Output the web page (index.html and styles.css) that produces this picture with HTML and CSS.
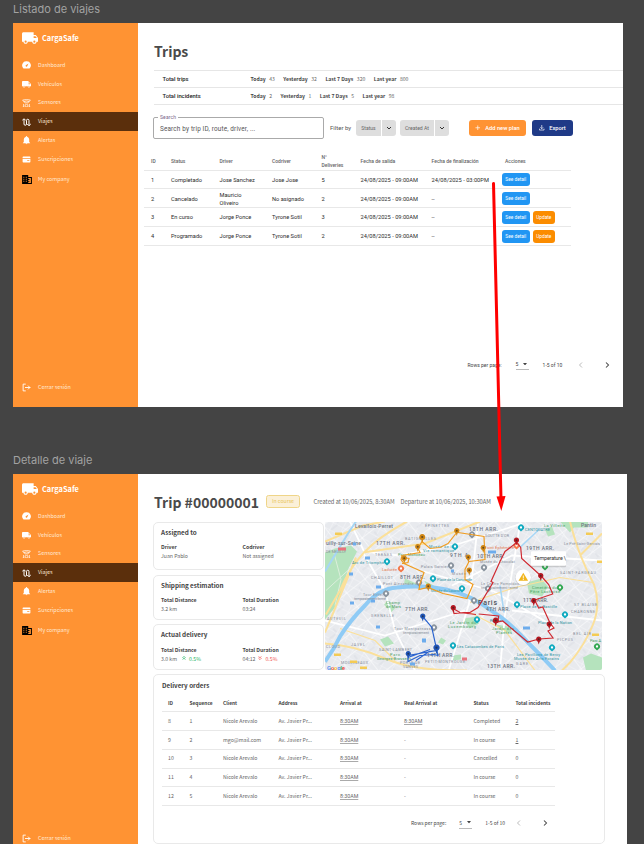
FILE: index.html
```html
<!DOCTYPE html>
<html lang="es">
<head>
<meta charset="utf-8">
<title>CargaSafe</title>
<link rel="stylesheet" href="styles.css">
</head>
<body>
<svg class="defs" width="0" height="0">
  <symbol id="truck" viewBox="1 4 22 16"><path d="M20 8h-3V4H3c-1.1 0-2 .9-2 2v11h2c0 1.66 1.34 3 3 3s3-1.34 3-3h6c0 1.66 1.34 3 3 3s3-1.34 3-3h2v-5l-3-4zM6 18.5a1.5 1.5 0 1 1 0-3 1.5 1.5 0 0 1 0 3zm13.5-9l1.96 2.5H17V9.5h2.5zm-1.5 9a1.5 1.5 0 1 1 0-3 1.5 1.5 0 0 1 0 3z"/></symbol>
  <symbol id="gauge" viewBox="0 0 24 24"><path fill-rule="evenodd" d="M12 1a11.500 11.500 0 0 0-8.500 20h17A11.500 11.500 0 0 0 12 1zm5.500 6-3.500 8a2.500 2.500 0 1 1-4-3z"/></symbol>
  <symbol id="sensor" viewBox="0 0 24 24"><path fill="none" stroke="currentColor" stroke-width="2.100" d="M1 3q11-3 22 0M4 7.500q8-4 16 0M8 11.500q4-2.500 8 0M1 3l7 8M23 3l-7 8M4 14v9M20 14v9M1 23h6M17 23h6"/><circle cx="12" cy="18.500" r="3.600" fill="none" stroke="currentColor" stroke-width="2.100"/></symbol>
  <symbol id="route" viewBox="0 0 24 24"><path fill="none" stroke="currentColor" stroke-width="2.800" d="M5 3v14a3.500 3.500 0 0 0 7 0V7a3.500 3.500 0 0 1 7 0v14M0 7l5-5 5 5M14 17l5 5 5-5"/></symbol>
  <symbol id="bell" viewBox="2 1 20 22"><path d="M12 22.500c1.300 0 2.300-1 2.300-2H9.700c0 1 1 2 2.300 2zm7-6v-6c0-3.500-2-6-5.200-6.800V3a1.800 1.800 0 0 0-3.600 0v.7C7 4.500 5 7 5 10.500v6L2.500 19v1h19v-1z"/></symbol>
  <symbol id="card" viewBox="0 0 24 24"><path d="M1 9V6a2 2 0 0 1 2-2h18a2 2 0 0 1 2 2v3zM1 11h22v8a2 2 0 0 1-2 2H3a2 2 0 0 1-2-2zM14 15v2h6v-2z" fill-rule="evenodd"/></symbol>
  <symbol id="company" viewBox="0 0 24 22"><path fill-rule="evenodd" d="M0 0h15v5h9v17H0zM3 4v2.500h2.500V4zm6 0v2.500h2.500V4zM3 9v2.500h2.500V9zm6 0v2.500h2.500V9zM3 14v2.500h2.500V14zm6 0v2.500h2.500V14zM15 7.500V10h3v2h-3v3h3v2h-3v2.500h6.500v-12z"/></symbol>
  <symbol id="logout" viewBox="0 0 24 24"><path fill="none" stroke="currentColor" stroke-width="2.400" d="M10 3H3v18h7M8 12h14M16 7l5 5-5 5"/></symbol>
  <symbol id="down" viewBox="0 0 12 12"><path fill="none" stroke="currentColor" stroke-width="2" d="M2 4l4 4 4-4"/></symbol>
  <symbol id="tri" viewBox="0 0 10 6"><path d="M0 0h10L5 6z"/></symbol>
  <symbol id="prev" viewBox="0 0 12 12"><path fill="none" stroke="currentColor" stroke-width="1.600" d="M8 1L3 6l5 5"/></symbol>
  <symbol id="next" viewBox="0 0 12 12"><path fill="none" stroke="currentColor" stroke-width="2.100" d="M4 1l5 5-5 5"/></symbol>
  <symbol id="pin" viewBox="0 0 12 18" overflow="visible"><path d="M6 18L4 11.700A6 6 0 1 1 8 11.700z"/><circle cx="6" cy="6" r="2.200" fill="#222" opacity=".6"/></symbol>
  <symbol id="poi" viewBox="0 0 12 14" overflow="visible"><path d="M6 14L2 10.500A6 6 0 1 1 10 10.500z"/><circle cx="6" cy="6" r="2.300" fill="#fff"/></symbol>
</svg>

<div class="canvas">
  <h2 class="board-name">Listado de viajes</h2>
  <section class="board board-list">
    <nav class="side">
      <div class="brand"><svg><use href="#truck"/></svg><span>CargaSafe</span></div>
      <a class="item"><svg><use href="#gauge"/></svg>Dashboard</a>
      <a class="item"><svg><use href="#truck"/></svg>Vehículos</a>
      <a class="item"><svg><use href="#sensor"/></svg>Sensores</a>
      <a class="item active"><svg><use href="#route"/></svg>Viajes</a>
      <a class="item"><svg><use href="#bell"/></svg>Alertas</a>
      <a class="item"><svg><use href="#card"/></svg>Suscripciones</a>
      <a class="item company"><svg><use href="#company"/></svg>My company</a>
      <a class="item logout"><svg><use href="#logout"/></svg>Cerrar sesión</a>
    </nav>
    <main class="main">
      <h1 class="title">Trips</h1>
      <div class="stats"><b class="name">Total trips</b><b>Today</b><i>43</i><b>Yesterday</b><i>32</i><b>Last 7 Days</b><i>320</i><b>Last year</b><i>800</i></div>
      <div class="stats last"><b class="name">Total incidents</b><b>Today</b><i>2</i><b>Yesterday</b><i>1</i><b>Last 7 Days</b><i>5</i><b>Last year</b><i>98</i></div>
      <div class="tools">
        <div class="search"><span class="legend">Search</span>Search by trip ID, route, driver, ...</div>
        <span class="filter">Filter by</span>
        <div class="split status"><span>Status</span><em><svg><use href="#down"/></svg></em></div>
        <div class="split created"><span>Created At</span><em><svg><use href="#down"/></svg></em></div>
        <button class="btn add"><svg viewBox="0 0 12 12"><path d="M6 1v10M1 6h10"/></svg>Add new plan</button>
        <button class="btn export"><svg viewBox="0 0 12 12"><path d="M6 0v8M3 5l3 3 3-3M1 8v3h10V8"/></svg>Export</button>
      </div>
      <div class="trips">
        <div class="row head"><span>ID</span><span>Status</span><span>Driver</span><span>Codriver</span><span>N°<br>Deliveries</span><span>Fecha de salida</span><span>Fecha de finalización</span><span class="acc">Acciones</span></div>
        <div class="row"><span>1</span><span>Completado</span><span>Jose Sanchez</span><span>Jose Jose</span><span>5</span><span>24/08/2025 - 09:00AM</span><span>24/08/2025 - 03:00PM</span><span class="acts"><button>See detail</button></span></div>
        <div class="row"><span>2</span><span>Cancelado</span><span>Mauricio<br>Oliveiro</span><span>No asignado</span><span>2</span><span>24/08/2025 - 09:00AM</span><span>--</span><span class="acts"><button>See detail</button></span></div>
        <div class="row"><span>3</span><span>En curso</span><span>Jorge Ponce</span><span>Tyrone Sotil</span><span>3</span><span>24/08/2025 - 09:00AM</span><span>--</span><span class="acts"><button>See detail</button><button class="upd">Update</button></span></div>
        <div class="row"><span>4</span><span>Programado</span><span>Jorge Ponce</span><span>Tyrone Sotil</span><span>2</span><span>24/08/2025 - 09:00AM</span><span>--</span><span class="acts"><button>See detail</button><button class="upd">Update</button></span></div>
      </div>
      <div class="pager"><span>Rows per page:</span><span class="size">5<svg><use href="#tri"/></svg></span><span>1-5 of 10</span><svg class="prev"><use href="#prev"/></svg><svg class="next"><use href="#next"/></svg></div>
    </main>
  </section>

  <h2 class="board-name second">Detalle de viaje</h2>
  <section class="board board-detail">
    <nav class="side">
      <div class="brand"><svg><use href="#truck"/></svg><span>CargaSafe</span></div>
      <a class="item"><svg><use href="#gauge"/></svg>Dashboard</a>
      <a class="item"><svg><use href="#truck"/></svg>Vehículos</a>
      <a class="item"><svg><use href="#sensor"/></svg>Sensores</a>
      <a class="item active"><svg><use href="#route"/></svg>Viajes</a>
      <a class="item"><svg><use href="#bell"/></svg>Alertas</a>
      <a class="item"><svg><use href="#card"/></svg>Suscripciones</a>
      <a class="item company"><svg><use href="#company"/></svg>My company</a>
      <a class="item logout"><svg><use href="#logout"/></svg>Cerrar sesión</a>
    </nav>
    <main class="main">
      <header class="trip-head"><h1 class="title">Trip #00000001</h1><span class="badge">In course</span><span class="made">Created at 10/06/2025, 8:30AM</span><span class="dep">Departure at 10/06/2025, 10:30AM</span></header>
      <div class="overview">
        <div class="cards">
          <div class="info assigned"><h3>Assigned to</h3><dl><dt>Driver</dt><dt>Codriver</dt><dd>Juan Pablo</dd><dd>Not assigned</dd></dl></div>
          <div class="info shipping"><h3>Shipping estimation</h3><dl><dt>Total Distance</dt><dt>Total Duration</dt><dd>3.2 km</dd><dd>03:24</dd></dl></div>
          <div class="info actual"><h3>Actual delivery</h3><dl><dt>Total Distance</dt><dt>Total Duration</dt>
            <dd>3.0 km<span class="up"><svg viewBox="0 0 12 12"><path d="M1 6l5-5 5 5M2 11l4-5 4 5"/></svg>0.5%</span></dd>
            <dd>04:12<span class="dn"><svg viewBox="0 0 12 12"><path d="M1 6l5 5 5-5M2 1l4 5 4-5"/></svg>0.5%</span></dd></dl></div>
        </div>
        <svg class="map" viewBox="325 521.500 277 148">
          <defs>
            <pattern id="st1" width="11" height="8" patternUnits="userSpaceOnUse" patternTransform="rotate(28)"><path d="M0 0h11M0 0v8" fill="none" stroke="#f8f9fb" stroke-width=".7"/></pattern>
            <pattern id="st2" width="23" height="17" patternUnits="userSpaceOnUse" patternTransform="rotate(-38)"><path d="M0 0h23M0 0v17" fill="none" stroke="#fff" stroke-width="1"/><path d="M4 9h8M14 3v5" stroke="#d5d8df" stroke-width=".7"/></pattern>
          </defs>
          <path fill="#e8eaee" d="M325 521h277v149H325z"/>
          <path fill="url(#st1)" d="M325 521h277v149H325z"/>
          <path fill="url(#st2)" d="M325 521h277v149H325z"/>
          <g fill="#b5e3bd">
            <path d="M325 552l10-4 16-3 6 6-9 18-5 18-8 20-10 12z"/>
            <path d="M560 521h28v6h-14l-4 5zM527 582l14-4 7 8-6 10-13-3zM464 618l12-2 3 7-10 5zM388 600l7 8-4 4-7-8zM496 624l12 2 4 5-8 2zM583 657l8-4 11 4v13h-16zM405 578l16 7-3 2-14-4zM380 639l8-3 6 7-9 3zM424 580l10 5-6 2zM441 637l5 3-3 4-5-2zM545 529l7-3 3 8-7 2zM452 655l9-1v5l-8 1z"/>
          </g>
          <path d="M333 549l8 30-6 26M326 590l24-22" fill="none" stroke="#dcefdc" stroke-width="1"/>
          <g fill="none" stroke="#fff" stroke-width="1.800">
            <path d="M350 521l14 30 35 4M363 552l22 38 10 40 20 40M400 555l60-12 62-20M424 571l70 20 60 35M478 523l-9 80-20 66M602 560l-90-5-60 30M500 669l5-55 15-90M325 620l60 15 80-25M602 620l-90-10"/>
          </g>
          <g fill="none" stroke="#fbe09a" stroke-width="2">
            <path d="M407 521q-28 15-43 31T340 590l-14 24M325 541l38-16 22-4M325 643q30 2 60 15t82 12M570 521q5 20 11 35t13 28q7 20-1 40t-23 38l-8 8M580 555l22-22M363 552l62-9 55-22M356 557l-31 75"/>
            <path stroke-width="1.200" d="M470 602l45-15 45-10 33 5M395 660l-20-20-35-12M470 612l35 18 30 40"/>
          </g>
          <path d="M325 571l9-15 14-23 8-12" fill="none" stroke="#a6d6f5" stroke-width="2"/>
          <path d="M325 661q9-12 15-25 10-16 25-31 14-17 32-18 25-3 49 2 25 5 48 23 16 10 33 29 14 14 28 29" fill="none" stroke="#8fcbf5" stroke-width="4"/>
          <path d="M520 547l20-19M500 585l4 27" fill="none" stroke="#a8d7f6" stroke-width="1.600"/>
          <g class="m-area">
            <text x="355" y="527" textLength="38">Levallois-Perret</text><text x="326" y="544" textLength="35">uilly-sur-Seine</text>
            <text x="376" y="544" textLength="29">17TH ARR.</text><text x="400" y="578" textLength="25">8TH ARR.</text><text x="405" y="610" textLength="24">7TH ARR.</text><text x="427" y="656" textLength="27">14TH ARR.</text><text x="450" y="556" textLength="18">9TH A</text>
            <text x="469" y="530" textLength="29">18TH ARR.</text><text x="477" y="557" textLength="27">10TH ARR.</text><text x="526" y="549" textLength="28">19TH ARR.</text><text x="523" y="601" textLength="25">11TH ARR.</text><text x="486" y="610" textLength="24">4TH ARR.</text><text x="487" y="667" textLength="28">13TH ARR.</text><text class="city" x="478" y="604" textLength="19">Paris</text><text x="581" y="526.500" textLength="15">Pantin</text>
          </g>
          <g class="m-small">
            <text x="425" y="526.500" textLength="24">ÉPINETTES</text><text x="405" y="539" textLength="31">BATIGNOLLES</text><text x="375" y="555" textLength="17">TERNES</text><text x="371" y="578" textLength="22">CHAILLOT</text><text x="371" y="616" textLength="23">GRENELLE</text><text x="327" y="619" textLength="19">AUTEUIL</text><text x="351" y="645" textLength="14">JAVEL</text><text x="379" y="650" textLength="33">SAINT-LAMBERT</text><text x="400" y="663" textLength="20">PORTE DE</text><text x="403" y="667" textLength="15">VANVES</text><text x="425" y="662" textLength="40">PETIT-MONTROUGE</text><text x="326" y="647" textLength="14">CLOUD</text><text x="326" y="552" textLength="20">DE NEUILLY</text><text x="341" y="663" textLength="27">MOULINEAUX</text>
            <text x="485" y="536" textLength="24">GOUTTE D'OR</text><text x="560" y="573" textLength="36">SAINT-FARGEAU</text><text x="574" y="605" textLength="23">ST BLAISE</text><text x="571" y="612" textLength="24">CHARONNE</text><text x="573" y="634" textLength="18">BEL AIR</text><text x="557" y="640" textLength="16">PICPUS</text><text x="516" y="664" textLength="12">GARE</text>
            <text x="421" y="567" textLength="27">Palais Garnier</text><text x="383" y="584" textLength="36">Pont Alexandre III</text><text x="363" y="595" textLength="20">Tour Eiffel</text><text x="354" y="599" textLength="32">temporairement fermé</text><text x="394" y="629" textLength="39">Tour Montparnasse</text><text x="403" y="633" textLength="26">temporairement</text><text x="452" y="574" textLength="14">Musée</text><text x="564" y="544" textLength="36">Le Pré-Saint-Gervais</text><text x="480" y="562" textLength="35">Musée du Chocolat</text><text x="481" y="584" textLength="38">Le Centre Pompidou</text><text x="481" y="588" textLength="37">temporairement fermé</text>
          </g>
          <g class="m-teal">
            <text x="352" y="563" textLength="32">Arc de Triomphe</text><text x="429" y="547" textLength="25">Musée de la</text><text x="423" y="551" textLength="31">Vie romantique</text><text x="437" y="580" textLength="35">Place de la Concorde</text><text x="431" y="591" textLength="29">Musée du Louvre</text><text x="525" y="530" textLength="25">CENTQUATRE</text><text x="490" y="621" textLength="12">Panthéon</text><text x="520" y="607" textLength="37">Place de la Bastille</text><text x="538" y="623" textLength="34">Place de la Nation</text><text x="517" y="655" textLength="43">Les Pavillons de Bercy</text><text x="514" y="659" textLength="45">Musée des Arts Forains</text><text x="457" y="647" textLength="47">Les Catacombes de Paris</text>
            <g class="m-green"><text x="398" y="555" textLength="27">Parc Monceau</text><text x="386" y="603" textLength="14">Champ</text><text x="386" y="607" textLength="15">de Mars</text><text x="450" y="623" textLength="26">Le Jardin du</text><text x="448" y="627" textLength="28">Luxembourg</text><text x="492" y="629" textLength="22">Jardin des</text><text x="496" y="633" textLength="16">Plantes</text><text x="390" y="655" textLength="10">Parc</text><text x="377" y="659" textLength="34">Georges-Brassens</text><text x="532" y="588" textLength="25">Cimetière du</text><text x="530" y="592" textLength="30">Père Lachaise</text><text x="544" y="526" textLength="21">La Villette</text><text x="590" y="641.500" textLength="11">Parc A</text></g>
          </g>
          <g class="m-food"><text x="382" y="570" textLength="15">Ladurée</text><text x="484" y="548" textLength="30">Point Éphémère</text></g>
          <g fill="#f4cb55"><path d="M335 532h7v2.500h-7zM334 653h7v2.500h-7zM350 660h7v2.500h-7zM360 666h7v2.500h-7zM586 532h7v2.500h-7zM597 560h5v2.500h-5zM592 633h7v2.500h-7z"/></g>
          <path fill="#e8737d" d="M338 547h8v3h-8zM462 657h5v3h-5z"/>
          <path fill="#6dacec" d="M353 542h3v3h-3zM365 556h5v3h-5zM349 572h4v3h-4zM376 585h5v3h-5zM350 601h4v3h-4zM371 599h4v3h-4zM422 638h4v4h-4zM451 569h3v3h-3zM410 662h5v3h-5zM488 550h8v3h-8zM523 626h7v3h-7zM376 625h4v3h-4z"/>
          <g fill="#12abc0"><use href="#poi" x="384" y="558" width="6" height="7"/><use href="#poi" x="452" y="543" width="6" height="7"/><use href="#poi" x="430" y="575" width="6" height="7"/><use href="#poi" x="459" y="585" width="6" height="7"/><use href="#poi" x="450" y="642" width="6" height="7"/><use href="#poi" x="518" y="524" width="6" height="7"/><use href="#poi" x="474" y="616" width="6" height="7"/><use href="#poi" x="514" y="601" width="6" height="7"/><use href="#poi" x="562" y="611" width="6" height="7"/><use href="#poi" x="549" y="644" width="6" height="7"/></g>
          <g fill="#34a853"><use href="#poi" x="542" y="563" width="6" height="7"/><use href="#poi" x="557" y="584" width="6" height="7"/><use href="#poi" x="594" y="643" width="6" height="7"/></g>
          <g fill="#8a949f"><use href="#poi" x="383" y="590" width="6" height="7"/><use href="#poi" x="431" y="624" width="6" height="7"/><use href="#poi" x="448" y="562" width="6" height="7"/><use href="#poi" x="416" y="579" width="6" height="7"/><use href="#poi" x="469" y="531" width="6" height="7"/><use href="#poi" x="481" y="564" width="6" height="7"/><use href="#poi" x="485" y="585" width="6" height="7"/><use href="#poi" x="471" y="597" width="6" height="7"/></g>
          <g fill="#f4794b"><use href="#poi" x="398" y="565" width="6" height="7"/><use href="#poi" x="513.500" y="542" width="6" height="7"/></g>
          <g fill="none" stroke-width="1.200">
            <path stroke="#f09c20" d="M456.700 532L448 543l-8 4-10 1-8-7-4 7 2 4-18 3-1 4 3 4 20 9-4 11-1 6 9-2 15 6 24 5 6-14-8-5v-10l4-8 16-2-1-23-26-4zM403 557l6 1-1 4-6 1"/>
            <path stroke="#cf2a32" d="M476 614l-16-2-7-4 1 5 10-1 6 0 8-5 15-25-2-1 9-20 5-10 11.700-9 4 5 1 11 20 18 7 8 4 9.500-18 6 4 8 4-1 7.300 16 4 5-6 3 5 7-14 1-11.300 3-25-21-5 1 1-6-20-2"/>
            <path stroke="#2b64cf" d="M422.700 616l9 10.700L438 655l-4-1-14 1-12 6v-6l29-5-8 1-13 9M408 657l22-8"/>
          </g>
          <g fill="#cf8615"><use href="#pin" x="454" y="527.500" width="5.500" height="8"/><use href="#pin" x="419" y="533.500" width="6.500" height="9"/><use href="#pin" x="415" y="543.500" width="5.500" height="8"/><use href="#pin" x="401.500" y="555" width="5.500" height="8"/><use href="#pin" x="425.500" y="583" width="5.500" height="8"/><use href="#pin" x="480.500" y="544.500" width="5.500" height="8"/><use href="#pin" x="465.500" y="554" width="5.500" height="8"/><use href="#pin" x="466.500" y="567" width="5.500" height="8"/></g>
          <g fill="#b51822"><use href="#pin" x="513.700" y="537" width="5.500" height="8"/><use href="#pin" x="538" y="572.500" width="5.500" height="8"/><use href="#pin" x="531" y="597.500" width="5.500" height="8"/><use href="#pin" x="546.500" y="621" width="5.500" height="8"/><use href="#pin" x="536" y="636" width="5.500" height="8"/><use href="#pin" x="492.500" y="617" width="6.500" height="9"/><use href="#pin" x="450.500" y="604.500" width="5.500" height="8"/></g>
          <g fill="#1f55b5"><use href="#pin" x="420" y="613" width="5.500" height="8"/><use href="#pin" x="433" y="644" width="7" height="9.500"/><use href="#pin" x="405.500" y="650.500" width="5.500" height="8"/></g>
          <circle cx="523.300" cy="577.400" r="8" fill="#888" opacity=".3"/><circle cx="523.300" cy="576.800" r="7.700" fill="#fff"/>
          <path d="M523.300 572.200l4.800 8h-9.600z" fill="#f1b51c"/><path d="M523.300 575v3M523.300 578.500v1" stroke="#fff" stroke-width=".9"/>
          <rect x="531.500" y="551.800" width="34.500" height="15" rx="1" fill="#777" opacity=".3"/><rect x="531" y="550.700" width="35" height="14.500" rx="1" fill="#fff"/>
          <text class="m-tip" x="534" y="559.300" textLength="32">Temperature \</text>
          <text class="m-google" x="327" y="669" textLength="18"><tspan fill="#4285f4">G</tspan><tspan fill="#ea4335">o</tspan><tspan fill="#fbbc05">o</tspan><tspan fill="#4285f4">g</tspan><tspan fill="#34a853">l</tspan><tspan fill="#ea4335">e</tspan></text>
        </svg>
      </div>
      <div class="orders">
        <h3>Delivery orders</h3>
        <div class="orow head"><span>ID</span><span>Sequence</span><span>Client</span><span>Address</span><span>Arrival at</span><span>Real Arrival at</span><span>Status</span><span>Total incidents</span></div>
        <div class="orow"><span>8</span><span>1</span><span>Nicole Arevalo</span><span>Av. Javier Pr...</span><span class="t">8:30AM</span><span class="t">8:30AM</span><span>Completed</span><span><u>2</u></span></div>
        <div class="orow"><span>9</span><span>2</span><span>mgo@mail.com</span><span>Av. Javier Pr...</span><span class="t">8:30AM</span><span>-</span><span>In course</span><span><u>1</u></span></div>
        <div class="orow"><span>10</span><span>3</span><span>Nicole Arevalo</span><span>Av. Javier Pr...</span><span class="t">8:30AM</span><span>-</span><span>Cancelled</span><span>0</span></div>
        <div class="orow"><span>11</span><span>4</span><span>Nicole Arevalo</span><span>Av. Javier Pr...</span><span class="t">8:30AM</span><span>-</span><span>In course</span><span>0</span></div>
        <div class="orow"><span>12</span><span>5</span><span>Nicole Arevalo</span><span>Av. Javier Pr...</span><span class="t">8:30AM</span><span>-</span><span>In course</span><span>0</span></div>
        <div class="pager"><span>Rows per page:</span><span class="size">5<svg><use href="#tri"/></svg></span><span>1-5 of 10</span><svg class="prev"><use href="#prev"/></svg><svg class="next"><use href="#next"/></svg></div>
      </div>
    </main>
  </section>
  <svg class="link" viewBox="0 0 14 332"><path d="M3.500 2.500L11 318" stroke="#f00" stroke-width="3" stroke-linecap="round"/><path d="M6.500 315.500l9-.5-4.200 15z" fill="#f00"/></svg>
</div>
</body>
</html>
```
FILE: styles.css
```css
* { box-sizing: border-box; }
html, body { margin: 0; height: 844px; overflow: hidden; background: #444; }
h1, h2, h3, dl, dd { margin: 0; }
i, em { font-style: normal; }
svg { display: block; fill: currentColor; flex: none; }
button { border: 0; padding: 0; font: inherit; color: #fff; }
.defs { position: absolute; }
.canvas { position: relative; height: 844px; padding-left: 13px; overflow: hidden; font-family: "Noto Sans CJK JP", "Open Sans", sans-serif; color: #444; }

.board-name { height: 23px; padding-top: 1px; font: 400 11px/16px Inter, sans-serif; color: #a2a2a2; white-space: nowrap; }
.board-name.second { height: 67px; padding-top: 45px; }
.board { display: flex; background: #fff; }
.board-list { width: 610px; height: 384px; }
.board-detail { width: 613.500px; height: 384px; }
.main { flex: 1; min-width: 0; }

.side { width: 125px; flex: none; display: flex; flex-direction: column; height: 384px; background: #ff9333; color: #fff; }
.brand { display: flex; align-items: center; height: 12px; margin: 9px 0 12px 9px; gap: 4px; font-size: 7.400px; font-weight: 700; }
.brand svg { width: 16px; height: 12px; }
.brand span { line-height: 12px; }
.item { display: flex; align-items: center; height: 18.750px; padding-left: 9px; gap: 7px; font-size: 5.400px; line-height: 9px; color: #ffe9d3; }
.item svg { width: 9px; height: 8.500px; color: #fff; }
.item.active { background: #5b2f0c; height: 19px; }
.item.company { margin-top: 1.500px; gap: 6px; }
.item.company svg { width: 10px; height: 9px; color: #000; }
.item.logout { margin: auto 0 10px; }
.item.logout svg { width: 9px; height: 9px; }

.title { font-size: 14px; font-weight: 700; line-height: 20px; color: #4a4a4a; white-space: nowrap; }
.board-list .title { height: 47px; padding: 17.500px 0 0 16px; }
.stats { display: flex; align-items: center; height: 17px; margin-left: 15.500px; padding-left: 9px; border-top: 1px solid #e6e6e6; font-size: 5.100px; line-height: 10px; white-space: nowrap; }
.stats.last { height: 18px; border-bottom: 1px solid #e6e6e6; }
.stats .name { width: 88px; font: 500 5.800px/10px Roboto, sans-serif; color: #222; }
.stats i { margin: 0 8.500px 0 3.500px; color: #666; }

.tools { display: flex; align-items: center; margin: 12px 0 0 15px; height: 22px; font: 400 5.500px/10px Roboto, sans-serif; white-space: nowrap; }
.search { position: relative; width: 171px; height: 22px; padding: 5.500px 0 0 6px; border: 1px solid #aaa; border-radius: 2px; font-size: 6.400px; letter-spacing: .15px; color: #555; }
.legend { position: absolute; left: 4px; top: -6px; padding: 0 2px; background: #fff; font-size: 5px; color: #79658a; }
.filter { width: 32px; padding-left: 6px; font-size: 6px; color: #555; }
.split { display: flex; height: 16px; border-radius: 3px; overflow: hidden; background: #dedede; color: #666; line-height: 16px; }
.split span { flex: 1; text-align: center; }
.split em { width: 15px; border-left: 1px solid #fff; display: flex; align-items: center; justify-content: center; }
.split svg { width: 6px; height: 6px; color: #333; }
.status { width: 40px; font-size: 5px; }
.created { width: 49px; margin-left: 4px; font-size: 5.100px; }
.btn { display: flex; align-items: center; justify-content: center; gap: 4.500px; height: 16px; border-radius: 3px; background: #ff9333; font-weight: 500; font-size: 5.700px; }
.btn svg { width: 5.500px; height: 5.500px; fill: none; stroke: #fff; stroke-width: 1.500; }
.add { width: 57px; margin-left: 20px; }
.export { width: 41px; margin-left: 6px; background: #1f3a87; }

.trips { width: 427px; margin: 12px 0 0 6px; font: 400 5.700px/8px Roboto, sans-serif; color: #2c2c2c; }
.row { display: grid; grid-template-columns: 20px 48.500px 52.500px 49.500px 39px 71px 70.500px 1fr; align-items: center; height: 18.750px; padding: .8px 0 0 7px; border-bottom: 1px solid #e8e8e8; white-space: nowrap; }
.row.head { height: 19.500px; font-size: 5px; color: #666; font-weight: 500; }
.row .acc { padding-left: 3px; }
.acts { display: flex; gap: 3.500px; }
.acts button { width: 27.500px; height: 13px; border-radius: 3px; background: #2196f3; font-size: 4.800px; line-height: 13px; text-align: center; }
.acts .upd { width: 21.500px; background: #fb8c00; }

.pager { display: flex; align-items: center; height: 12px; font-size: 5px; line-height: 8px; color: #444; white-space: nowrap; }
.pager .size { display: flex; align-items: center; gap: 5px; width: 13px; height: 11px; margin: 0 13px 0 13px; border-bottom: 1px solid #bbb; }
.pager .size svg { width: 4px; height: 2.500px; }
.pager .prev { width: 6px; height: 6px; margin-left: auto; color: #aaa; }
.pager .next { width: 6px; height: 6px; margin-left: 20px; }
.board-list .pager { width: 142px; margin: 113px 0 0 329.500px; font-family: Roboto, sans-serif; }
.board-list .pager .size { margin: 0 14px; }

.trip-head { display: flex; align-items: center; height: 47.500px; padding: 7.500px 0 0 16px; font-size: 5.750px; line-height: 10px; white-space: nowrap; color: #666; }
.trip-head .title { width: 112px; }
.badge { width: 34px; height: 13px; border: 1px solid #efd588; border-radius: 2.500px; background: #fbf0d8; color: #e9c55a; font-size: 5.200px; line-height: 10.500px; text-align: center; }
.made { width: 100.500px; padding-left: 13.500px; }

.overview { display: flex; margin-left: 15px; gap: 1px; height: 148.500px; }
.cards { width: 171px; display: flex; flex-direction: column; }
.info { padding: 5px 0 0 7px; border: 1px solid #e9e9e9; border-radius: 5px; }
.assigned { height: 48.500px; }
.shipping { height: 45px; margin-top: 5px; padding-top: 4.500px; }
.actual { height: 46px; margin-top: 4px; }
.info h3, .orders h3 { font-size: 6.300px; font-weight: 700; line-height: 9px; }
.info dl { display: grid; grid-template-columns: 81.500px 1fr; margin-top: 5.500px; font-size: 5.200px; line-height: 9.300px; color: #666; }
.info dt { font-weight: 700; color: #444; }
.info dd { display: flex; }
.up, .dn { display: flex; align-items: center; gap: 3px; margin-left: 5px; color: #27b364; }
.dn { margin-left: 3px; color: #ef5350; }
.up svg, .dn svg { width: 4px; height: 4px; fill: none; stroke: currentColor; stroke-width: 2; }

.map { width: 277px; height: 148px; border-radius: 2px; font-family: Roboto, sans-serif; }
.m-area { font-size: 5px; font-weight: 500; fill: #6c7481; }
.m-area .city { font-size: 7px; fill: #4d535d; }
.m-small { font-size: 3.700px; fill: #858c98; }
.m-teal { font-size: 3.900px; fill: #2c91a0; }
.m-green { fill: #3f9b5d; }
.m-food { font-size: 4px; fill: #e2754b; }
.m-tip { font-size: 5.400px; fill: #333; }
.m-google { font-size: 6px; font-weight: 500; }

.orders { width: 452px; height: 169.500px; margin: 4px 0 0 15px; padding: 5.500px 0 0 8px; border: 1px solid #e9e9e9; border-radius: 5px; }
.orow { display: grid; grid-template-columns: 21.500px 33.500px 55.500px 61.500px 64px 69.500px 42px 1fr; align-items: center; width: 393px; height: 18.850px; padding-left: 6px; border-bottom: 1px solid #e8e8e8; font-size: 5.200px; line-height: 8.500px; color: #666; white-space: nowrap; }
.orow.head { height: 17px; margin-top: 5.500px; font-size: 4.850px; font-weight: 700; color: #444; }
.orow .t { font-family: Roboto, sans-serif; font-size: 5.300px; text-decoration: underline #aaa .5px; }
.orders .pager { width: 137px; margin: 11px 0 0 249px; }

.link { position: absolute; left: 490px; top: 181px; width: 14px; height: 332px; overflow: visible; }
```
